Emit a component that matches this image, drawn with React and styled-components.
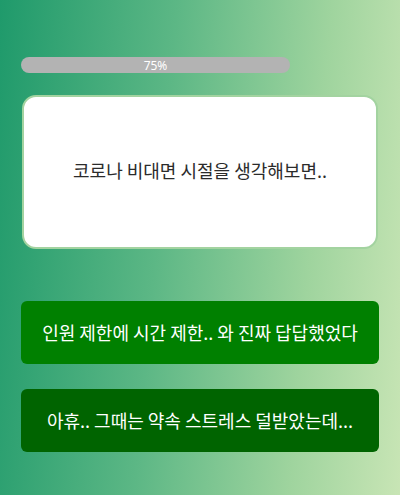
import React from 'react'
import styled, { createGlobalStyle } from 'styled-components'

const GlobalStyle = createGlobalStyle`
  html, body {
    margin: 0;
    padding: 0;
  }
  body {
    font-family: 'Noto Sans CJK KR', 'Noto Sans', sans-serif;
  }
`

const Screen = styled.div`
  box-sizing: border-box;
  width: 400px;
  height: 495px;
  padding: 57px 21px 0;
  background: linear-gradient(95deg, #1f9a6b 0%, #5cb785 40%, #9fd49e 75%, #c8e5b5 100%);
  display: flex;
  flex-direction: column;
`

const Progress = styled.div`
  position: relative;
  width: 269px;
  height: 16px;
  border-radius: 8px;
  background: #b3b3b3;
  overflow: hidden;
`

const ProgressLabel = styled.span`
  position: absolute;
  inset: 0;
  display: flex;
  align-items: center;
  justify-content: center;
  color: #fff;
  font-family: 'Noto Sans', sans-serif;
  font-size: 12px;
`

const QuestionCard = styled.div`
  box-sizing: border-box;
  margin: 22px 1px 0;
  height: 154px;
  padding-bottom: 4px;
  background: #fff;
  border: 2px solid #a3d3a0;
  border-radius: 14px;
  display: flex;
  align-items: center;
  justify-content: center;
  color: #2b2b2b;
  font-size: 18px;
`

const Answers = styled.div`
  display: flex;
  flex-direction: column;
  gap: 25px;
  margin-top: 52px;
`

const Answer = styled.button`
  height: 63px;
  border: none;
  border-radius: 6px;
  background: ${p => (p.$dark ? '#006400' : '#008000')};
  color: #fff;
  font-family: inherit;
  font-size: 18px;
  display: flex;
  align-items: center;
  justify-content: center;
  padding: 0 0 2px;
  cursor: pointer;
`

const answers = [
  { text: '인원 제한에 시간 제한.. 와 진짜 답답했었다' },
  { text: '아휴.. 그때는 약속 스트레스 덜받았는데...', dark: true },
]

export default function App() {
  return (
    <>
      <GlobalStyle />
      <Screen>
        <Progress>
          <ProgressLabel>75%</ProgressLabel>
        </Progress>
        <QuestionCard>코로나 비대면 시절을 생각해보면..</QuestionCard>
        <Answers>
          {answers.map(a => (
            <Answer key={a.text} $dark={a.dark}>
              {a.text}
            </Answer>
          ))}
        </Answers>
      </Screen>
    </>
  )
}
